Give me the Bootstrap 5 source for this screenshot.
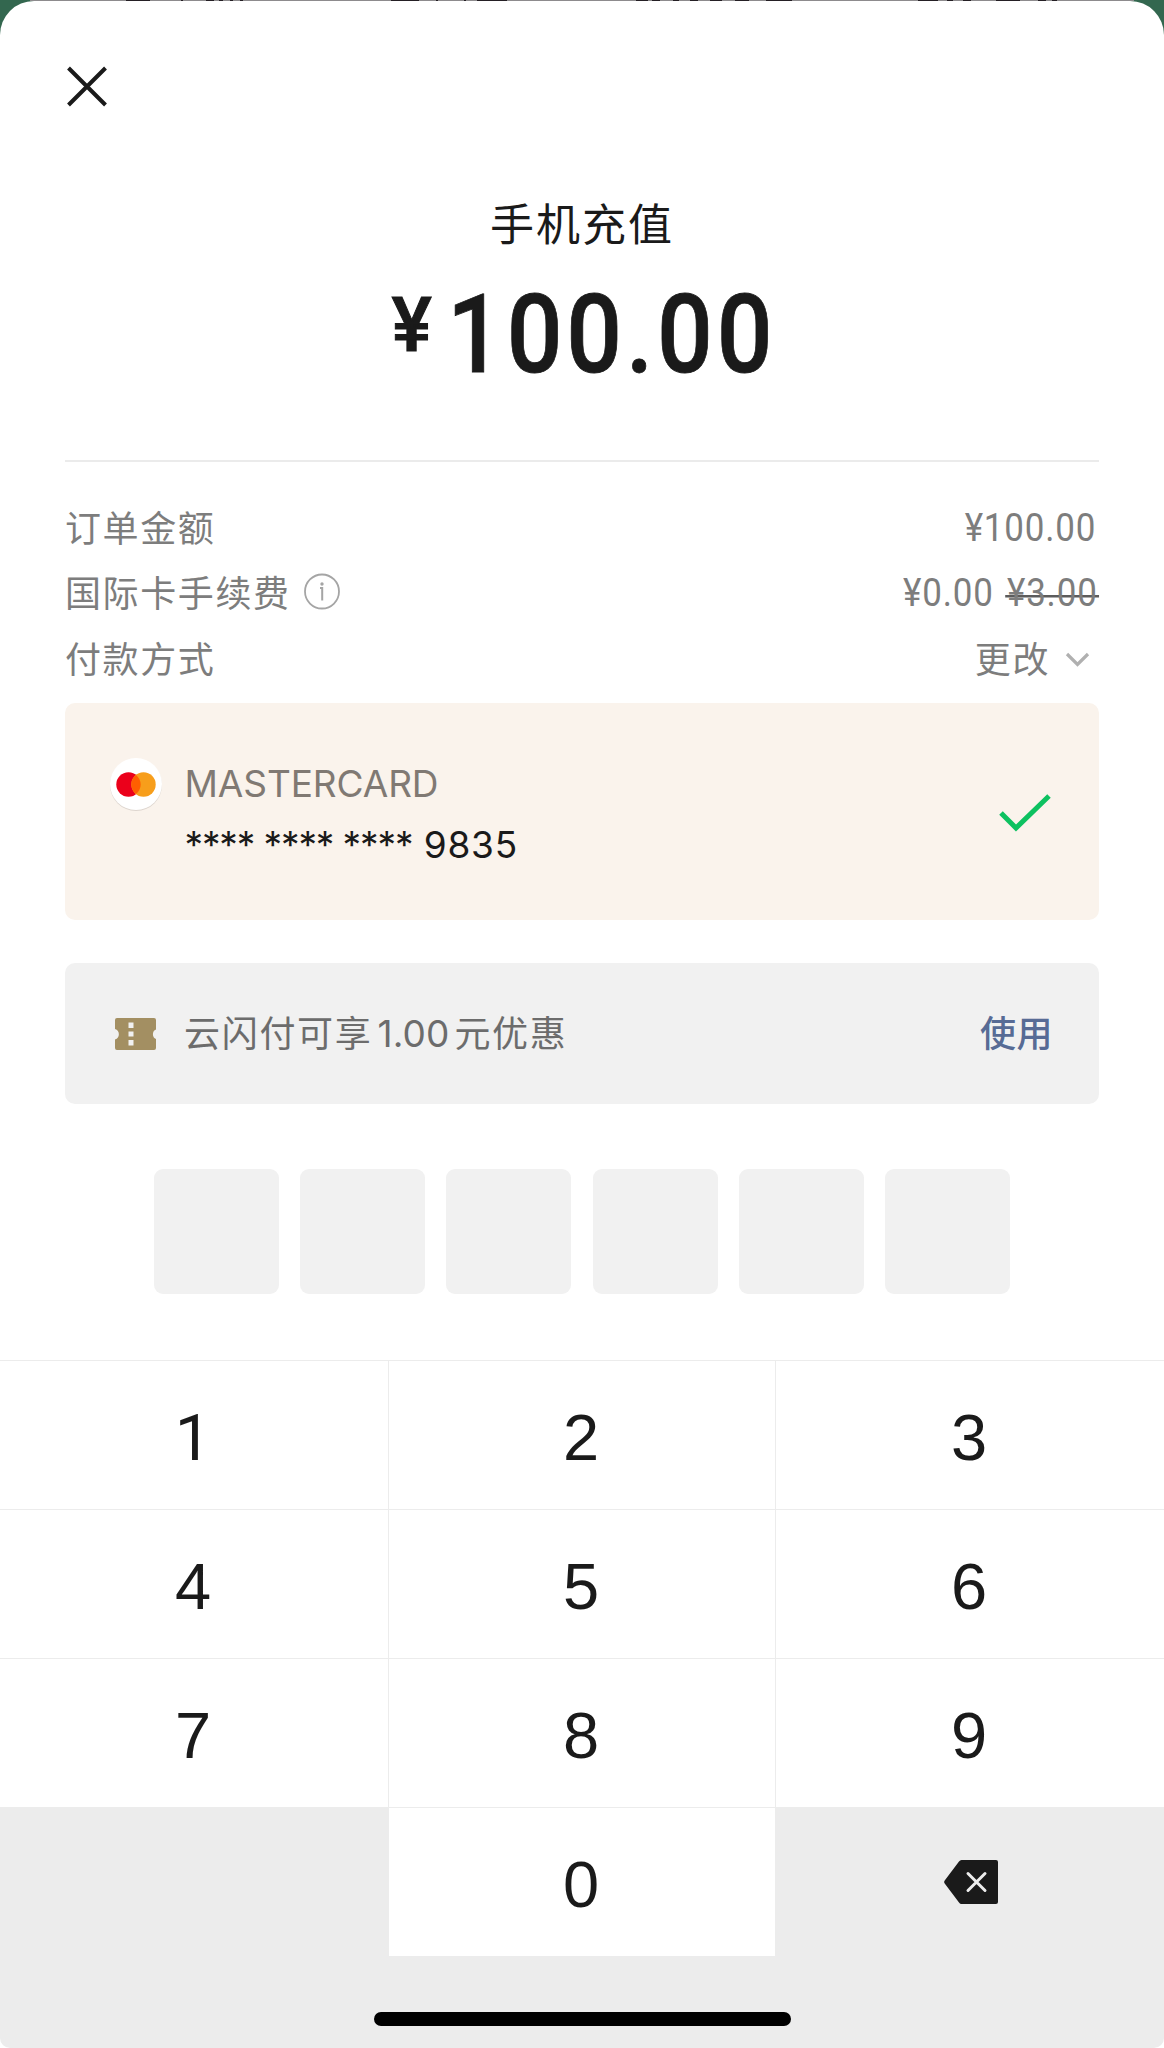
<!DOCTYPE html>
<html lang="zh-CN">
<head>
<meta charset="utf-8">
<meta name="viewport" content="width=device-width, initial-scale=1">
<title>手机充值</title>
<link href="https://cdn.jsdelivr.net/npm/bootstrap@5.3.0/dist/css/bootstrap.min.css" rel="stylesheet">
<style>
body{background:#33674f;color:#1a1a1a;font-family:Inter,"Noto Sans CJK SC",sans-serif;width:1164px;height:2048px;overflow:hidden}
svg{display:block;flex:none}
.behind{height:1px}
.pay-sheet{height:2047px;background:#fff;border-radius:34px 34px 0 0}
.sheet-body{height:1359px;padding:65px 65px 0}
.pay-title{font-size:44px;line-height:60px;letter-spacing:2px;margin-top:83.5px;font-family:"Noto Sans CJK SC",sans-serif}
.pay-amount{font-family:Roboto,sans-serif;font-weight:500;font-size:109px;line-height:110px;height:110px;margin-top:28px}
.pay-amount .yen{font-size:76px;line-height:90px;margin-right:15px;-webkit-text-stroke:1px #1a1a1a}
.pay-amount .total{letter-spacing:4.3px;transform:scaleX(.9);transform-origin:left;margin-right:-40px;-webkit-text-stroke:.8px #1a1a1a}
.rule{height:2px;background:#ebebeb;margin-top:70.500px}
.pay-rows{margin-top:34px;color:#7d7d7d;font-size:36px;letter-spacing:1.6px;font-family:"Noto Sans CJK SC",sans-serif}
.pay-rows>div{height:65.4px;line-height:65.4px}
.row-label{line-height:60px;height:60px}
.money{font-family:Roboto,sans-serif;font-size:38px;letter-spacing:.9px;word-spacing:2px;transform:scaleX(.92);transform-origin:right}
.order-sum{padding-right:2.500px}
.struck{background:linear-gradient(#5c5c5c,#5c5c5c) 0 24px/100% 2.5px no-repeat;padding:0 2px 0 2px}
.card-tile{height:217px;background:#faf3ec;border-radius:10px;margin-top:11px;padding:0 48px 0 45px}
.tile-text{width:800px;margin-left:22.500px;font-size:37px;padding-top:4px}
.tile-text>div{line-height:61px}
.brand-name{color:#807973;letter-spacing:-.1px}
.stars{letter-spacing:-1.1px}
.stars-end{margin-right:2px}
.tail{letter-spacing:.8px}
.coupon{height:141px;background:#f1f1f1;border-radius:10px;margin-top:43px;padding:0 46px 0 50px;font-family:"Noto Sans CJK SC",sans-serif}
.coupon-text{font-size:36px;letter-spacing:1.7px;color:#6c6c6c;margin-left:27px;padding-bottom:2px}
.coupon-text span{font-family:Inter,sans-serif;font-weight:400;font-size:37px;letter-spacing:.1px;margin:0 5px}
.use{font-size:36px;letter-spacing:.5px;color:#576b95;font-weight:500;padding-bottom:5px}
.pins{gap:21.2px;margin-top:65px}
.pins i{width:125px;height:125px;border-radius:9px;background:#f1f1f1}
.keypad{height:688px;display:grid;grid-template-columns:388px 386px 388px;grid-auto-rows:148px;gap:1px;background:#ececec;padding-top:1px;border-radius:0 0 10px 10px;font-family:"Liberation Sans",sans-serif;font-size:65px;line-height:1}
.keypad>div{background:#fff;display:flex;align-items:center;justify-content:center;padding:4px 2px 0 0}
.keypad>.blank{background:none;padding:0}
.keypad>.delete-key{padding-left:2px}
.keypad>.one{font-family:Roboto,sans-serif;padding-top:6px}
.home-bar{grid-column:1/4;background:none!important;height:91px;padding:0!important}
.home-bar i{width:417px;height:14px;border-radius:7px;background:#000;margin-top:33px}
.foot{background:#fff}
</style>
<script src="https://cdn.jsdelivr.net/npm/bootstrap@5.3.0/dist/js/bootstrap.bundle.min.js"></script>
</head>
<body>
<svg class="behind" width="1164" height="1" aria-hidden="true"><path d="M30 0H1134V1H30Z" fill="#8d8b8d"/><path d="M126 .5h24M181 .5h2M206 .5h8M219 .5h4M230 .5h3M240 .5h3M391 .5h28M436 .5h2M464 .5h2M477 .5h30M636 .5h12M652 .5h8M673 .5h6M690 .5h8M710 .5h12M735 .5h14M766 .5h26M918 .5h20M947 .5h6M963 .5h8M996 .5h24M1038 .5h8M1052 .5h5" stroke="#241f24" stroke-width="1"/></svg>
<main class="pay-sheet d-flex flex-column">
<section class="sheet-body">
<svg width="44" height="42" viewBox="0 0 44 42" aria-label="关闭"><path d="M3.500 2L40.500 39M40.500 2L3.500 39" stroke="#1a1a1a" stroke-width="4"/></svg>
<div class="pay-title text-center">手机充值</div>
<div class="pay-amount d-flex justify-content-center"><span class="yen">¥</span><span class="total">100.00</span></div>
<div class="rule"></div>
<div class="pay-rows">
<div class="d-flex justify-content-between"><span class="row-label">订单金额</span><span class="money order-sum">¥100.00</span></div>
<div class="d-flex justify-content-between"><span class="row-label d-flex align-items-center">国际卡手续费<svg width="51" height="38" viewBox="-12 0 51 38"><circle cx="19" cy="19.500" r="17" fill="none" stroke="#a5a5a5" stroke-width="1.800"/><circle cx="19" cy="12" r="1.700" fill="#a5a5a5"/><path d="M17 16h2.200V28.500" fill="none" stroke="#a5a5a5" stroke-width="2"/></svg></span><span class="money">¥0.00 <span class="struck">¥3.00</span></span></div>
<div class="d-flex justify-content-between"><span class="row-label">付款方式</span><span class="row-label d-flex align-items-center">更改<svg width="49" height="20" viewBox="-13 0 49 20"><path d="M4 7L14.500 17.500L25 7" fill="none" stroke="#b0b0b0" stroke-width="3.200"/></svg></span></div>
</div>
<div class="card-tile d-flex align-items-center">
<svg width="52" height="118" viewBox="0 0 52 118"><circle cx="26" cy="32" r="26" fill="#ddd5ce"/><circle cx="26" cy="31" r="26" fill="#fff"/><circle cx="18.500" cy="31.500" r="12.200" fill="#eb001b"/><circle cx="33.500" cy="31.500" r="12.200" fill="#f79e1b"/><path d="M26 21.900a12.200 12.200 0 0 1 0 19.200a12.200 12.200 0 0 1 0-19.200" fill="#ff5f00"/></svg>
<div class="tile-text"><div class="brand-name">MASTERCARD</div><div><span class="stars stars-end">**** **** **** </span><span class="tail">9835</span></div></div>
<svg class="ms-auto" width="52" height="40" viewBox="0 0 52 40"><path d="M2 21L17 36L50 4" fill="none" stroke="#0dc160" stroke-width="5"/></svg>
</div>
<div class="coupon d-flex align-items-center">
<svg width="42" height="32" viewBox="0 0 42 32"><path fill="#a38f62" fill-rule="evenodd" d="M2 0H39Q41 0 41 2V11.500A5.200 5.200 0 0 0 41 21V30Q41 32 39 32H2Q0 32 0 30V21.500A5.500 5.500 0 0 0 0 11V2Q0 0 2 0ZM13.500 4.500V10H18.500V4.500ZM13.500 13.500V18.500H18.500V13.500ZM13.500 22V27.500H18.500V22Z"/></svg>
<div class="coupon-text">云闪付可享<span>1.00</span>元优惠</div>
<div class="use ms-auto">使用</div>
</div>
<div class="pins d-flex justify-content-center"><i></i><i></i><i></i><i></i><i></i><i></i></div>
</section>
<div class="foot">
<section class="keypad">
<div class="one">1</div><div>2</div><div>3</div><div>4</div><div>5</div><div>6</div><div>7</div><div>8</div><div>9</div>
<div class="blank"></div><div>0</div><div class="blank delete-key"><svg width="54" height="44" viewBox="0 0 54 44"><path d="M17.500 0H52Q54 0 54 2V42Q54 44 52 44H17.500Q16 44 15 42.500L.7 23.500Q-.4 22 .7 20.500L15 1.500Q16 0 17.500 0Z" fill="#1a1a1a"/><path d="M24 13.500L41 30.500M41 13.500L24 30.500" stroke="#ededed" stroke-width="3" stroke-linecap="round"/></svg></div>
<div class="home-bar"><i></i></div>
</section>
</div>
</main>
</body>
</html>
